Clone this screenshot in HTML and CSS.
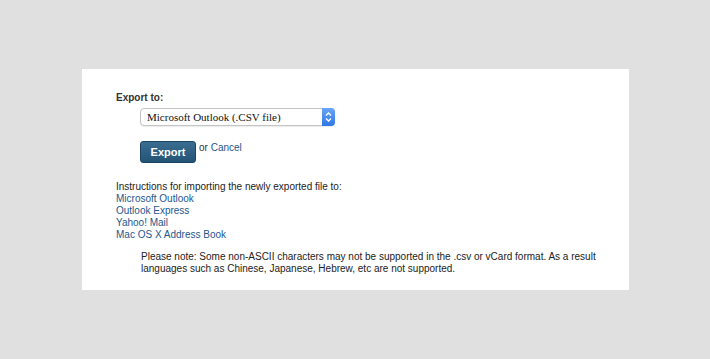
FILE: index.html
```html
<!DOCTYPE html>
<html lang="en">
<head>
    <meta charset="UTF-8">
    <title>Export Contacts</title>
    <link rel="stylesheet" href="styles.css">
</head>
<body>
    <div class="panel">
        <!-- format picker -->
        <form class="export-form">
            <label class="field-label" for="format">Export to:</label>
            <div class="select-wrap">
                <select id="format" class="format-select">
                    <option>Microsoft Outlook (.CSV file)</option>
                    <option>Outlook Express (.CSV file)</option>
                    <option>vCard (.VCF file)</option>
                </select>
                <span class="select-arrow">
                    <svg width="7" height="10" viewBox="0 0 7 10">
                        <path d="M1 3.5 L3.5 1 L6 3.5 M1 6.5 L3.5 9 L6 6.5" fill="none" stroke="#fff" stroke-width="1.3"/>
                    </svg>
                </span>
            </div>
            <div class="actions">
                <button type="submit" class="export-btn">Export</button>
                <span class="or-text">or <a href="#">Cancel</a></span>
            </div>
        </form>

        <!-- help links -->
        <div class="instructions">
            <div>Instructions for importing the newly exported file to:</div>
            <a href="#">Microsoft Outlook</a>
            <a href="#">Outlook Express</a>
            <a href="#">Yahoo! Mail</a>
            <a href="#">Mac OS X Address Book</a>
        </div>

        <p class="note">Please note: Some non-ASCII characters may not be supported in the .csv or vCard format. As a result languages such as Chinese, Japanese, Hebrew, etc are not supported.</p>
    </div>
</body>
</html>
```

FILE: styles.css
```css
body {
    margin: 0;
    padding: 69px 0 0 82px;
    background: #e0e0e0;
    font-family: "Liberation Sans", Arial, sans-serif;
    font-size: 10px;
    color: #222;
    min-height: 100vh;
    box-sizing: border-box;
}
.panel {
    background: white;
    width: 547px;
    height: 221px;
    box-sizing: border-box;
    padding: 22px 10px 0 34px;
    line-height: 12px;
}
.export-form {
    margin: 0;
}
.field-label {
    display: block;
    font-weight: bold;
    color: #333;
    line-height: 13px;
}
.select-wrap {
    position: relative;
    width: 195px;
    height: 18px;
    margin: 4px 0 0 24px;
}
.format-select {
    appearance: none;
    -webkit-appearance: none;
    width: 100%;
    height: 18px;
    margin: 0;
    padding: 0 0 0 6px;
    border: 1px solid #c4c4c4;
    border-radius: 4px;
    background: white;
    font-family: "Liberation Serif", "Times New Roman", serif;
    font-size: 11px;
    color: #111;
    box-shadow: 0 1px 1px rgba(0,0,0,0.08);
}
.select-arrow {
    position: absolute;
    top: 0;
    right: 0;
    width: 13px;
    height: 18px;
    display: flex;
    align-items: center;
    justify-content: center;
    background: linear-gradient(#6aa6f8, #2f76e6);
    border-radius: 0 4px 4px 0;
    pointer-events: none;
}
.actions {
    display: flex;
    align-items: flex-start;
    gap: 3px;
    margin: 15px 0 0 24px;
}
.export-btn {
    width: 56px;
    height: 22px;
    padding: 0;
    border: 1px solid #1c4565;
    border-radius: 3px;
    background: linear-gradient(#3a6d91, #245375);
    color: white;
    font-family: "Liberation Sans", Arial, sans-serif;
    font-size: 11px;
    font-weight: bold;
    cursor: pointer;
}
.or-text {
    color: #333;
    line-height: 14px;
}
a {
    color: #24578f;
    text-decoration: none;
}
.instructions {
    margin-top: 18px;
}
.instructions a {
    display: block;
}
.note {
    margin: 10px 0 0 25px;
}
```
